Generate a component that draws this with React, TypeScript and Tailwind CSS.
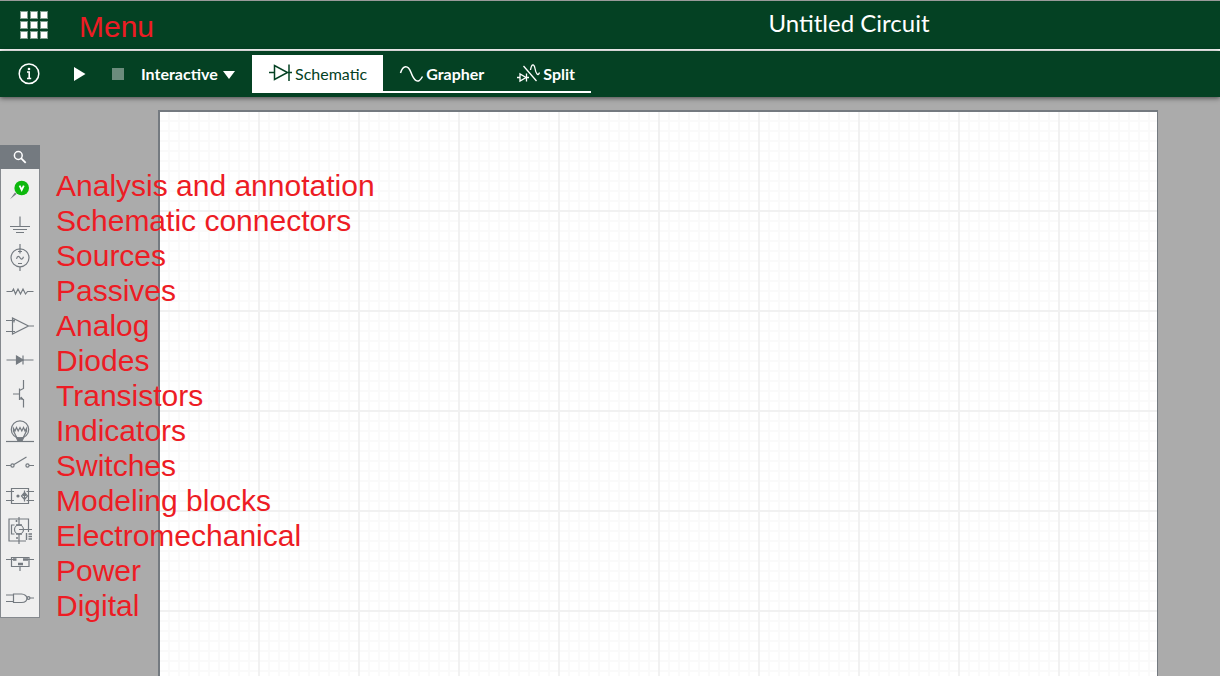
import React, { useState } from "react";

type Item = { id: string; label: string; icon: React.ReactNode };

const items: Item[] = [
  {
    id: "analysis",
    label: "Analysis and annotation",
    icon: (
      <>
        <path d="M9 27.2 L14 20.5 L15.5 22 Z" fill="#747a80" stroke="none" />
        <circle cx="20.7" cy="16" r="7.3" fill="#0db80d" stroke="none" />
        <path d="M18.6 13.6 L20.7 18 L22.8 13.6" stroke="#fff" strokeWidth="1.8" />
      </>
    ),
  },
  {
    id: "connectors",
    label: "Schematic connectors",
    icon: <path d="M19 10.5 V20.5 M9 20.5 H29 M12 23.5 H26 M15 26.5 H23" />,
  },
  {
    id: "sources",
    label: "Sources",
    icon: (
      <>
        <circle cx="19" cy="17.8" r="9" />
        <path d="M19 4 V13.5 M17 11.5 H21 M17 23.5 H21 M19 27 V31" />
        <path d="M15.5 18.8 C16.5 15.5 18 16 19 17.8 S21.5 20 22.5 16.8" />
      </>
    ),
  },
  {
    id: "passives",
    label: "Passives",
    icon: <path d="M5.5 17.5 H11 L12.5 15 L14.5 20 L17 15 L19.5 20 L22 15 L24.5 20 L26.5 17.5 H32.5" />,
  },
  {
    id: "analog",
    label: "Analog",
    icon: (
      <path d="M11.5 10 V26 L27.5 18 Z M5 12.5 H14 M13 11.5 V14.5 M5 23.5 H14 M27.5 18 H33" />
    ),
  },
  {
    id: "diodes",
    label: "Diodes",
    icon: (
      <>
        <path d="M5.5 18 H32.5 M22 13.5 V22.5" />
        <path d="M15.5 14 L22 18 L15.5 22 Z" fill="#747a80" />
      </>
    ),
  },
  {
    id: "transistors",
    label: "Transistors",
    icon: (
      <>
        <path d="M22.5 4 V12.5 L18.5 14.5 M18.5 12.5 V24 M12 18 H18.5 M18.5 21.5 L22.5 23.5 V31.5" />
        <path d="M19 23.5 L20.5 20.5 L22.5 23.8 Z" fill="#747a80" stroke="none" />
      </>
    ),
  },
  {
    id: "indicators",
    label: "Indicators",
    icon: (
      <>
        <circle cx="19" cy="19.5" r="8.7" />
        <path d="M16 28 L12.5 21 V18.5 L14 21 L15.5 17.5 L17.2 21 L19 17.5 L20.8 21 L22.5 17.5 L24 21 L25.5 18.5 V21 L22 28" />
        <path d="M15.5 27.8 H22.5 L21 31 H17 Z" fill="#747a80" />
        <path d="M5 31.5 H33" />
      </>
    ),
  },
  {
    id: "switches",
    label: "Switches",
    icon: (
      <>
        <circle cx="11.5" cy="21.5" r="1.6" />
        <circle cx="26.5" cy="21.5" r="1.6" />
        <path d="M5 21.5 H10 M28 21.5 H33 M13 20.5 L25.5 13" />
      </>
    ),
  },
  {
    id: "modeling",
    label: "Modeling blocks",
    icon: (
      <>
        <path d="M10.5 10.5 H27.5 V25.5 H10.5 Z M5 13.5 H13 M5 22.5 H13 M25.5 13.5 H33 M25.5 22.5 H33" />
        <path d="M23.5 12.5 V23.5 M23.5 14.5 L26.5 18 L23.5 21.5 L20.5 18 Z M22 17.5 H25" />
        <circle cx="17" cy="18" r="1.6" fill="#747a80" stroke="none" />
      </>
    ),
  },
  {
    id: "electromechanical",
    label: "Electromechanical",
    icon: (
      <>
        <path d="M27.5 20 V7 H8 V29 H25" />
        <circle cx="18" cy="17.5" r="4.5" />
        <path d="M18 5 V13 M18 22 V32 M18 17.5 H31 M13.5 13 H10.5 V22 H13.5" />
        <path d="M15.5 8 V10 M15 26 H17 M15 13 H21 M15 22 H21" strokeWidth="1.6" />
        <path d="M25.5 21 V28 M27.5 22 H31 M27.5 24.5 H31 M27.5 27 H31" strokeWidth="1.4" />
      </>
    ),
  },
  {
    id: "power",
    label: "Power",
    icon: (
      <>
        <path d="M5 13.5 H13 M25 13.5 H33 M10.5 11.5 H28 V20.5 H10.5 Z M19 20.5 V25" />
        <path d="M12 13.5 H15.5 M22 13.5 H27 M17 18 H22" strokeWidth="2.6" />
      </>
    ),
  },
  {
    id: "digital",
    label: "Digital",
    icon: (
      <>
        <path d="M12.5 14 H20.5 C24 14 26 16.5 26 18 C26 20.5 24 22.5 20.5 22.5 H12.5 Z" />
        <path d="M5 15 H12.5 M5 21.5 H12.5 M29 18 H33" />
        <circle cx="27.5" cy="18" r="1.4" />
      </>
    ),
  },
];

const tabs = [
  {
    name: "Schematic",
    icon: <path d="M0 8.5 H5.5 M5.5 1.5 V15.5 L18.5 8.5 Z M20 0.5 V17 M18.5 8.5 H23" strokeWidth="1.5" />,
  },
  {
    name: "Grapher",
    icon: <path d="M0.5 9 C3 1 8 0.5 11 8.5 S18 21 22.5 12.5" strokeWidth="1.5" />,
  },
  {
    name: "Split",
    icon: (
      <path
        d="M0 13.5 H3 M3 10 V17 L9 13.5 Z M9.5 9.5 V17.5 M9 13.5 H12 M6.5 2 L19.5 17 M13.5 6 C14.5 0 17 -1 18 4.5 S21 12.5 22.5 8.5"
        strokeWidth="1.3"
      />
    ),
  },
];

function Header() {
  return (
    <header className="flex h-[51px] items-center border-t border-b-2 border-t-[#9a9a9a] border-b-white bg-[#044123]">
      <div className="flex w-[478px] shrink-0 items-center gap-[31px] pl-5">
        <button type="button" aria-labelledby="menu-label" className="grid grid-cols-3 gap-0.5">
          {Array.from({ length: 9 }, (_, i) => (
            <span key={i} className="size-2 border border-[#7f9f8f] bg-white" />
          ))}
        </button>
        <span id="menu-label" className="pt-1 font-['Liberation_Sans',sans-serif] text-[30px] leading-8 text-[#ed1c24]">
          Menu
        </span>
      </div>
      <h1 className="flex-1 pb-1 text-center text-2xl">Untitled Circuit</h1>
    </header>
  );
}

function Toolbar() {
  const [active, setActive] = useState("Schematic");
  return (
    <div className="relative z-10 flex h-[46px] items-start bg-[#044123] pl-[18px] shadow-[0_1px_5px_rgba(0,0,0,0.6)]">
      <div className="flex h-[46px] items-center">
        <button type="button" aria-label="Info">
          <svg width="22" height="22" viewBox="0 0 22 22" fill="none" stroke="#fff">
            <circle cx="11" cy="10.7" r="9.8" strokeWidth="1.5" />
            <path d="M9 9 H11.2 V15.5 M9 15.5 H13.2" strokeWidth="1.6" />
            <circle cx="11" cy="6" r="1.3" fill="#fff" stroke="none" />
          </svg>
        </button>
        <button type="button" aria-label="Run" className="ml-[34px]">
          <svg width="12" height="14" viewBox="0 0 12 14">
            <path d="M0 0 L11.5 7 L0 14 Z" fill="#fff" />
          </svg>
        </button>
        <button type="button" aria-label="Stop" className="ml-[26px] size-3 bg-[#6b8c7c]" />
        <div className="relative ml-[17px] flex items-center">
          <select
            aria-label="Simulation type"
            defaultValue="Interactive"
            className="w-[94px] appearance-none bg-transparent text-base font-bold"
          >
            <option>Interactive</option>
          </select>
          <svg className="pointer-events-none absolute right-0 bottom-[7px]" width="12" height="8" viewBox="0 0 12 8">
            <path d="M0 0 H12 L6 8 Z" fill="#fff" />
          </svg>
        </div>
      </div>
      <div role="tablist" className="mt-1 ml-[17px] flex h-[38px] border-b-2 border-white">
        {tabs.map((t) => (
          <button
            key={t.name}
            type="button"
            role="tab"
            aria-selected={active === t.name}
            onClick={() => setActive(t.name)}
            className={
              active === t.name
                ? "flex items-center gap-[3px] bg-white pt-0.5 pr-4 pl-[17px] text-base text-[#044123]"
                : "flex items-center gap-[3px] pt-0.5 pr-4 pl-[17px] text-base font-bold text-white"
            }
          >
            <svg width="23" height="21" viewBox="0 0 23 21" fill="none" stroke="currentColor" overflow="visible">
              {t.icon}
            </svg>
            {t.name}
          </button>
        ))}
      </div>
    </div>
  );
}

function Palette() {
  return (
    <aside className="relative z-[1] mt-12 w-10 shrink-0 self-start">
      <button type="button" aria-label="Search" className="flex h-6 w-full items-center justify-center bg-[#747a80]">
        <svg width="14" height="14" viewBox="0 0 14 14" fill="none" stroke="#fff">
          <circle cx="5.3" cy="5.5" r="3.9" strokeWidth="1.5" />
          <path d="M8 8.2 L12.7 12.9" strokeWidth="1.8" />
        </svg>
      </button>
      <div className="flex flex-col border border-t-0 border-[#85898e] bg-[#efefef] py-[3px]">
        {items.map((it) => (
          <button key={it.id} type="button" aria-labelledby={it.id}>
            <svg
              className="block h-[34px] w-[38px]"
              viewBox="0 0 38 34"
              fill="none"
              stroke="#747a80"
              strokeWidth="1.2"
            >
              {it.icon}
            </svg>
          </button>
        ))}
      </div>
      <ul className="pointer-events-none absolute top-[23px] left-14 font-['Liberation_Sans',sans-serif] text-[30px] leading-[35px] whitespace-nowrap text-[#ed1c24]">
        {items.map((it) => (
          <li key={it.id} id={it.id}>
            {it.label}
          </li>
        ))}
      </ul>
    </aside>
  );
}

export default function App() {
  return (
    <div className="flex min-h-screen flex-col bg-[#ababab] font-[Lato,sans-serif] text-white">
      <Header />
      <Toolbar />
      <main className="flex flex-1">
        <Palette />
        <section
          aria-label="Canvas"
          className="mt-[13px] mr-[62px] ml-[118px] flex-1 border-t-2 border-r border-l-2 border-[#747a80] bg-white bg-[linear-gradient(to_right,#f1f1f1_2px,transparent_2px),linear-gradient(to_bottom,#f1f1f1_2px,transparent_2px),linear-gradient(to_right,#fafafa_2px,transparent_2px),linear-gradient(to_bottom,#fafafa_2px,transparent_2px)] bg-[size:100px_100px,100px_100px,10px_10px,10px_10px] bg-[position:-2px_-2px]"
        />
      </main>
    </div>
  );
}
